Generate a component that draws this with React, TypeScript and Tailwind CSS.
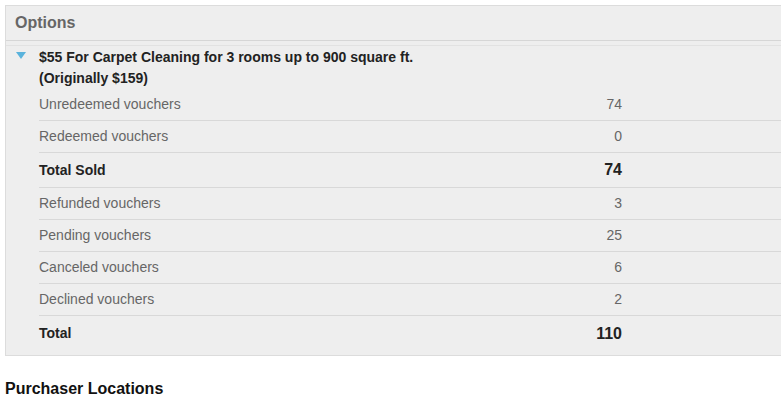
import React from "react";

type Row = { label: string; value: string; bold?: boolean };

const rows: Row[] = [
  { label: "Unredeemed vouchers", value: "74" },
  { label: "Redeemed vouchers", value: "0" },
  { label: "Total Sold", value: "74", bold: true },
  { label: "Refunded vouchers", value: "3" },
  { label: "Pending vouchers", value: "25" },
  { label: "Canceled vouchers", value: "6" },
  { label: "Declined vouchers", value: "2" },
  { label: "Total", value: "110", bold: true },
];

export default function App() {
  return (
    <div
      className="w-[781px] h-[408px] overflow-hidden bg-white pt-[5px] pl-[5px]"
      style={{ fontFamily: '"Liberation Sans", Arial, sans-serif' }}
    >
      <div className="w-[790px] border border-[#dcdcdc] bg-[#eeeeee]">
        <div className="h-[35px] border-b border-[#d6d6d6] pl-[9px] flex items-center">
          <span className="text-[16px] font-bold text-[#666666]">Options</span>
        </div>
        <div className="mt-[4px] border-t border-[#e2e2e2] pb-[4px]">
          <div className="flex">
            <div className="w-[33px] pl-[10px] pt-[6px]">
              <svg width="10" height="7" viewBox="0 0 10 7">
                <polygon points="0,0 10,0 5,7" fill="#5ab3dc" />
              </svg>
            </div>
            <div className="flex-1">
              <div className="pt-[1px] text-[14px] leading-[21px] font-bold text-[#222222]">
                $55 For Carpet Cleaning for 3 rooms up to 900 square ft.
                <br />
                (Originally $159)
              </div>
              <div>
                {rows.map((r, i) => (
                  <div
                    key={r.label}
                    className={
                      "flex items-center pr-[172px] " +
                      (r.bold ? "h-[35px] " : "h-[32px] ") +
                      (i < rows.length - 1 ? "border-b border-[#d8d8d8]" : "")
                    }
                  >
                    <div
                      className={
                        "flex-1 text-[14px] " +
                        (r.bold ? "font-bold text-[#222222]" : "text-[#666666]")
                      }
                    >
                      {r.label}
                    </div>
                    <div
                      className={
                        "w-[80px] text-right " +
                        (r.bold
                          ? "text-[16px] font-bold text-[#222222]"
                          : "text-[14px] text-[#666666]")
                      }
                    >
                      {r.value}
                    </div>
                  </div>
                ))}
              </div>
            </div>
          </div>
        </div>
      </div>
      <div className="mt-[21px] text-[16px] font-bold text-[#111111]">Purchaser Locations</div>
    </div>
  );
}
